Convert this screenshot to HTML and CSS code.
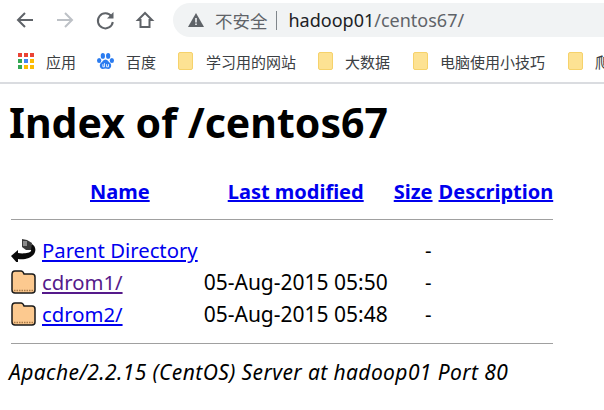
FILE: index.html
```html
<!DOCTYPE html>
<html lang="zh">
<head>
    <meta charset="UTF-8">
    <title>Index of /centos67</title>
    <link rel="stylesheet" href="styles.css">
</head>
<body>
    <div class="chrome">
        <div class="toolbar">
            <svg class="nav" width="24" height="24" viewBox="0 0 24 24"><path d="M20 12H5M12 5l-7 7 7 7" fill="none" stroke="#5f6368" stroke-width="2"/></svg>
            <svg class="nav" width="24" height="24" viewBox="0 0 24 24"><path d="M4 12h15M12 5l7 7-7 7" fill="none" stroke="#bdc1c6" stroke-width="2"/></svg>
            <svg class="nav" width="24" height="24" viewBox="0 0 24 24"><path d="M18.500 8.500A7.500 7.500 0 1 0 19.800 14" fill="none" stroke="#5f6368" stroke-width="2"/><path d="M20.500 4v6.500H14z" fill="#5f6368"/></svg>
            <svg class="nav" width="24" height="24" viewBox="0 0 24 24"><path d="M12 5L5 12h2.500v7h9v-7H19z" fill="none" stroke="#5f6368" stroke-width="2"/></svg>
            <div class="omnibox">
                <svg width="16" height="14" viewBox="0 0 16 14"><path d="M8 0L16 14H0z" fill="#5f6368"/><path d="M7.200 5h1.600v4.500H7.200zM7.200 10.500h1.600V12H7.200z" fill="#f1f3f4"/></svg>
                <span class="warn">不安全</span>
                <span class="sep"></span>
                <span class="url">hadoop01<span class="path">/centos67/</span></span>
            </div>
        </div>
        <div class="bookmarks">
            <div class="mark">
                <svg width="16" height="16" viewBox="0 0 16 16">
                    <rect x="0" y="0" width="4" height="4" fill="#ea4335"/><rect x="6" y="0" width="4" height="4" fill="#ea4335"/><rect x="12" y="0" width="4" height="4" fill="#ea4335"/>
                    <rect x="0" y="6" width="4" height="4" fill="#34a853"/><rect x="6" y="6" width="4" height="4" fill="#4285f4"/><rect x="12" y="6" width="4" height="4" fill="#fbbc05"/>
                    <rect x="0" y="12" width="4" height="4" fill="#34a853"/><rect x="6" y="12" width="4" height="4" fill="#fbbc05"/><rect x="12" y="12" width="4" height="4" fill="#fbbc05"/>
                </svg>
                <span>应用</span>
            </div>
            <div class="mark">
                <svg width="17" height="17" viewBox="0 0 16 16" fill="#2b7cf0">
                    <ellipse cx="2" cy="7" rx="2" ry="2.400"/><ellipse cx="5.500" cy="2.800" rx="2" ry="2.700"/><ellipse cx="10.500" cy="2.800" rx="2" ry="2.700"/><ellipse cx="14" cy="7" rx="2" ry="2.400"/>
                    <path d="M8 6c2.200 0 2.700 2.200 4.300 3.400 2 1.800 1 5.600-1.600 5.600-1 0-1.800-.4-2.700-.4s-1.700.4-2.700.4C2.700 15 1.700 11.200 3.700 9.400 5.300 8.200 5.800 6 8 6z"/>
                    <path d="M5.500 10.500v2.500h1.500v-3.500M9 10.500v2.500h1.800v-2.500" fill="none" stroke="#fff" stroke-width=".8"/>
                </svg>
                <span>百度</span>
            </div>
            <div class="mark"><i class="bm-folder"></i><span>学习用的网站</span></div>
            <div class="mark"><i class="bm-folder"></i><span>大数据</span></div>
            <div class="mark"><i class="bm-folder"></i><span>电脑使用小技巧</span></div>
            <div class="mark"><i class="bm-folder"></i><span>爬虫</span></div>
        </div>
    </div>

    <div class="content">
        <h1>Index of /centos67</h1>
        <table>
            <tr>
                <th class="icon-col"></th>
                <th><a href="#">Name</a></th>
                <th><a href="#">Last modified</a></th>
                <th><a href="#">Size</a></th>
                <th class="last"><a href="#">Description</a></th>
            </tr>
            <tr><th class="rule" colspan="5"><hr></th></tr>
            <tr>
                <td class="icon-col">
                    <svg width="25" height="24" viewBox="0 0 25 24"><path d="M0 18l7-6v3c5 1 12 0 13-2 .500-1-.500-2-2-3l3-4c3 2 4 5 3 8-2 6-10 8-17 7v5z" fill="#0a0a0a"/><path d="M11 1l5 1 5 3-1 7-5 0-4-3z" fill="#3a3a3a"/><path d="M12 3h4v5h-4z" fill="#8a8a8a"/></svg>
                </td>
                <td><a href="#">Parent Directory</a></td>
                <td></td>
                <td class="size">-</td>
                <td></td>
            </tr>
            <tr>
                <td class="icon-col">
                    <svg width="25" height="24" viewBox="0 0 25 24"><path d="M1 4.500Q1 1 4 1h6q2 0 3 3h8q3 0 3 3v13q0 3-3 3H4q-3 0-3-3z" fill="#fcc98f" stroke="#1a1a1a" stroke-width="1.500"/><path d="M3 20.500h19" stroke="#a87a48" stroke-width="1.500" stroke-dasharray="1.500 1"/></svg>
                </td>
                <td><a class="seen" href="#">cdrom1/</a></td>
                <td class="date">05-Aug-2015 05:50</td>
                <td class="size">-</td>
                <td></td>
            </tr>
            <tr>
                <td class="icon-col">
                    <svg width="25" height="24" viewBox="0 0 25 24"><path d="M1 4.500Q1 1 4 1h6q2 0 3 3h8q3 0 3 3v13q0 3-3 3H4q-3 0-3-3z" fill="#fcc98f" stroke="#1a1a1a" stroke-width="1.500"/><path d="M3 20.500h19" stroke="#a87a48" stroke-width="1.500" stroke-dasharray="1.500 1"/></svg>
                </td>
                <td><a href="#">cdrom2/</a></td>
                <td class="date">05-Aug-2015 05:48</td>
                <td class="size">-</td>
                <td></td>
            </tr>
            <tr><th class="rule" colspan="5"><hr></th></tr>
        </table>
        <address>Apache/2.2.15 (CentOS) Server at hadoop01 Port 80</address>
    </div>
</body>
</html>
```

FILE: styles.css
```css
body {
    margin: 0;
    font-family: "Noto Sans", "Noto Sans CJK SC", sans-serif;
    background-color: #fff;
    color: #000;
    overflow: hidden;
}

.chrome {
    height: 84px;
    box-sizing: border-box;
    border-bottom: 2px solid #dadce0;
}

.toolbar {
    display: flex;
    align-items: center;
    height: 40px;
    padding-left: 13px;
}

.nav {
    margin-right: 16px;
    flex: none;
}

.omnibox {
    flex: 1;
    height: 34px;
    display: flex;
    align-items: center;
    gap: 10px;
    padding-left: 15px;
    background-color: #f1f3f4;
    border-radius: 17px 0 0 17px;
}

.warn {
    font-size: 17.500px;
    color: #5f6368;
    margin-left: 1px;
}

.sep {
    width: 1px;
    height: 19px;
    background-color: #80868b;
    margin-left: -2px;
    margin-right: 2px;
}

.url {
    font-size: 18px;
    color: #202124;
}

.path {
    color: #5f6368;
}

.bookmarks {
    display: flex;
    align-items: center;
    height: 42px;
    padding-left: 18px;
    white-space: nowrap;
}

.mark {
    display: flex;
    align-items: center;
    gap: 12px;
    margin-right: 22px;
    font-size: 15px;
    color: #3c4043;
}

.mark:first-child {
    margin-right: 21px;
}

.mark:nth-child(3) {
    gap: 13px;
}

.mark:nth-child(n+4) {
    margin-right: 23px;
}

.bm-folder {
    display: block;
    width: 15px;
    height: 18px;
    background-color: #fde293;
    border: 1px solid #f6d26b;
    border-radius: 2px;
    box-sizing: border-box;
}

.content {
    padding: 0 9px;
    font-size: 20.300px;
}

h1 {
    font-size: 41px;
    line-height: 54px;
    margin: 11px 0 27px;
}

table {
    border-collapse: separate;
    border-spacing: 2px;
}

th {
    padding: 0 2px;
    line-height: 28px;
    font-size: 20px;
    font-weight: bold;
}

th.last {
    padding-right: 0;
}

th.rule {
    padding: 0;
}

td {
    padding: 0 2px;
    height: 30px;
    white-space: nowrap;
}

.icon-col {
    width: 25px;
    padding: 0 2px 0 0;
}

.icon-col svg {
    display: block;
}

td.date {
    font-size: 21px;
}

td.size {
    text-align: right;
    padding-right: 3px;
}

a {
    color: #0000ee;
}

a.seen {
    color: #551a8b;
}

hr {
    margin: 11px 0 13px;
    border: 0;
    border-top: 1px solid #a0a0a0;
}

tr:last-child hr {
    margin: 12px 0 0;
}

address {
    margin-top: 12px;
    font-size: 21px;
    letter-spacing: .4px;
    font-style: italic;
}
```
